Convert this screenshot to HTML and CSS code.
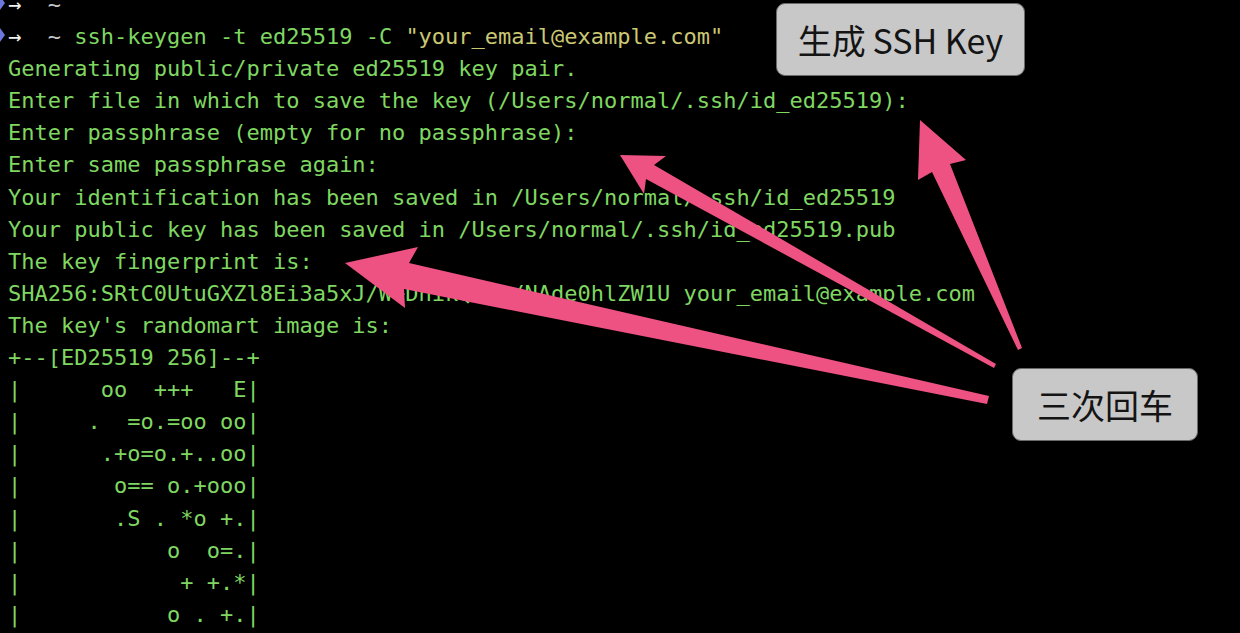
FILE: index.html
```
<!DOCTYPE html>
<html lang="zh-CN">

<head>
  <meta charset="UTF-8">
  <title>ssh-keygen</title>
  <link rel="stylesheet" href="styles.css">
</head>

<body>

  <div class="screen">
    <!-- terminal output -->
<pre class="term"><span class="mark"></span><span class="arrow">→</span>  <span class="home">~</span>
<span class="mark"></span><span class="arrow">→</span>  <span class="home">~</span> ssh-keygen -t ed25519 -C <span class="str">"your_email@example.com"</span>
Generating public/private ed25519 key pair.
Enter file in which to save the key (/Users/normal/.ssh/id_ed25519):
Enter passphrase (empty for no passphrase):
Enter same passphrase again:
Your identification has been saved in /Users/normal/.ssh/id_ed25519
Your public key has been saved in /Users/normal/.ssh/id_ed25519.pub
The key fingerprint is:
SHA256:SRtC0UtuGXZl8Ei3a5xJ/W+DhikQ7mz/NAde0hlZW1U your_email@example.com
The key's randomart image is:
+--[ED25519 256]--+
|      oo  +++   E|
|     .  =o.=oo oo|
|      .+o=o.+..oo|
|       o== o.+ooo|
|       .S . *o +.|
|           o  o=.|
|            + +.*|
|           o . +.|
</pre>

    <!-- annotation arrows -->
    <svg class="arrows" width="1240" height="633" viewBox="0 0 1240 633">
      <polygon points="920,120 966,160 950,164 1022,348 1018,350 932,172 918,180" />
      <polygon points="620,155 666,156 654,165 996,364 994,368 646,179 644,194" />
      <polygon points="345,263 418,247 409,263 989,396 987,404 404,289 405,308" />
    </svg>

    <div class="note note-gen">生成&thinsp;SSH Key</div>
    <div class="note note-enter">三次回车</div>
  </div>

</body>

</html>
```

FILE: styles.css
```
body {
  margin: 0;
  background-color: #000;
  overflow: hidden;
}

.screen {
  position: relative;
  height: 633px;
  overflow: hidden;
}

/* terminal text */
.term {
  margin: -11px 0 0;
  padding-left: 8px;
  font-family: "DejaVu Sans Mono", "Liberation Mono", monospace;
  font-size: 22px;
  line-height: 32.1px;
  color: #7fd762;
}

.mark {
  display: inline-block;
  margin-left: -8px;
  margin-right: 3px;
  border-left: 5px solid #6b78e0;
  border-top: 7px solid transparent;
  border-bottom: 7px solid transparent;
  vertical-align: 2px;
}

.arrow {
  color: #f2f2f2;
}

.home {
  color: #c8c8c8;
}

.str {
  color: #cbc873;
}

/* overlays */
.arrows {
  position: absolute;
  top: 0;
  left: 0;
}

.arrows polygon {
  fill: #ee5282;
}

.note {
  position: absolute;
  display: flex;
  align-items: center;
  justify-content: center;
  box-sizing: border-box;
  height: 73px;
  background-color: #c8c8c8;
  border: 1px solid #6a6a6a;
  border-radius: 9px;
  color: #141414;
  font-family: "Noto Sans CJK SC", "Liberation Sans", sans-serif;
  font-size: 34px;
}

.note-gen {
  top: 3px;
  left: 776px;
  width: 249px;
}

.note-enter {
  top: 368px;
  left: 1012px;
  width: 186px;
}
```
